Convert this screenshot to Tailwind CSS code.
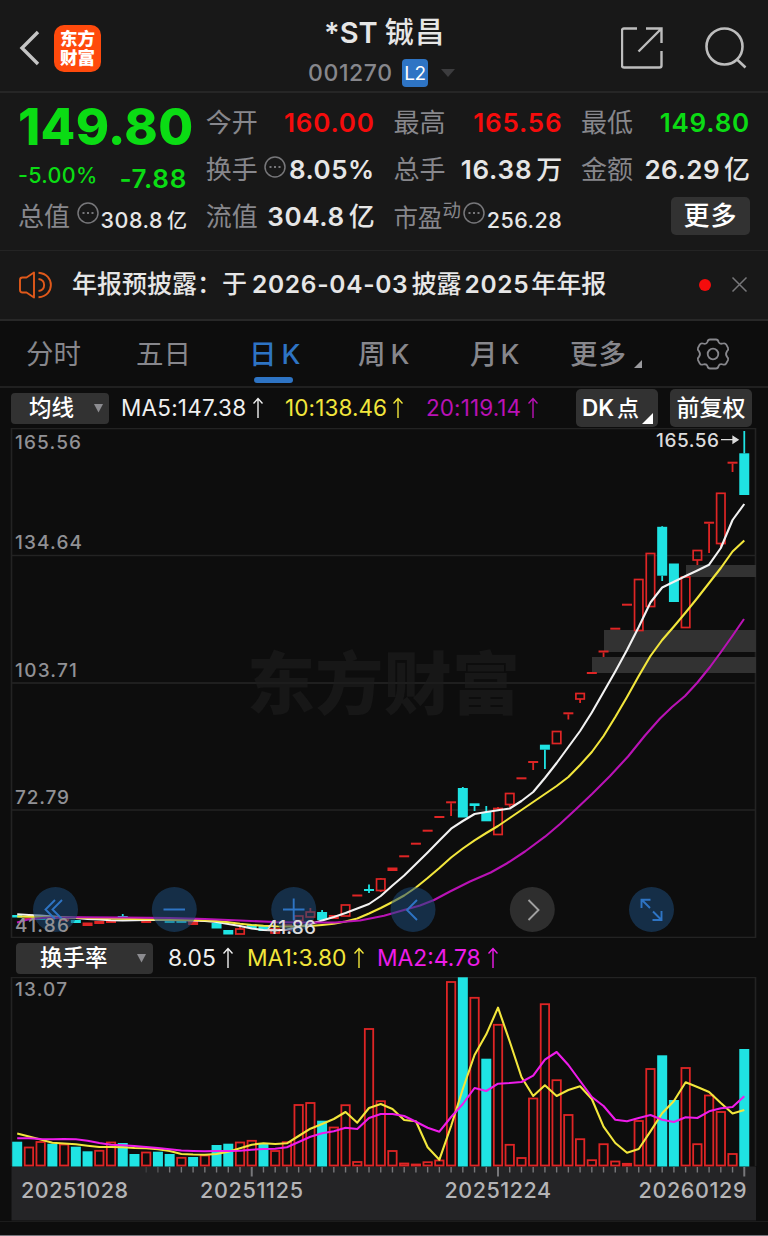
<!DOCTYPE html>
<html lang="zh-CN">
  <head>
    <meta charset="UTF-8" />
    <meta name="viewport" content="width=device-width, initial-scale=1.0" />
    <title>*ST铖昌 001270</title>
    <script src="https://cdn.jsdelivr.net/npm/@tailwindcss/browser@4"></script>
  </head>
  <body class="bg-[#0d0d0d] text-[#e6e6e6] font-['Inter','Noto_Sans_CJK_SC',sans-serif] w-[768px] h-[1236px] overflow-hidden whitespace-nowrap leading-none">
    <!-- Header -->
    <header class="h-[93px] bg-[#181818] border-b-2 border-[#262626] flex justify-between relative">
      <div class="flex items-center pl-[19px] pt-[5px] gap-[14px]">
        <svg class="w-[21px] h-9" viewBox="0 0 21 36" fill="none" stroke="#c4c4c4" stroke-width="3.4">
          <path d="M19 2 L3 18 L19 34" />
        </svg>
        <div class="w-[47px] h-[47px] rounded-[10px] bg-[#ff4a0c] text-white font-black text-[17.5px] leading-[19.5px] flex flex-col items-center justify-center">
          <span>东方</span>
          <span>财富</span>
        </div>
      </div>
      <div class="absolute left-[308px] top-0 w-[150px] pt-4">
        <h1 class="text-[29px] leading-[34px] font-medium pl-4 flex gap-[7px]"><span class="font-semibold">*ST</span><span class="tracking-[1.5px]">铖昌</span></h1>
        <div class="flex items-center mt-[9px] h-7">
          <span class="text-[23px] font-medium text-[#87878c] tracking-[0.6px] w-[94px]">001270</span>
          <span class="w-[26px] h-7 rounded bg-[#2e74c4] text-white text-[19px] tracking-[-0.5px] flex items-center justify-center">L2</span>
          <svg class="w-[14px] h-2 ml-[13px]" viewBox="0 0 14 8"><path d="M0 0 H14 L7 8 Z" fill="#3c3c3e" /></svg>
        </div>
      </div>
      <div class="flex items-start pt-[27px] pr-[21px] gap-[42px]">
        <svg class="w-[42px] h-[42px]" viewBox="0 0 42 42" fill="none" stroke="#bdbdbd" stroke-width="2.4">
          <path d="M16 1.500 H3 Q1 1.500 1 3.500 V38.500 Q1 40.500 3 40.500 H38.500 Q40.500 40.500 40.500 38.500 V24 M25 1.500 H40.500 V16 M40.500 1.500 L17.500 24.500" />
        </svg>
        <svg class="w-[42px] h-[42px]" viewBox="0 0 42 42" fill="none" stroke="#bdbdbd" stroke-width="2.6">
          <circle cx="19.500" cy="19.500" r="18" />
          <path d="M31.500 32 L40.500 40.500" />
        </svg>
      </div>
    </header>

    <!-- Quote summary -->
    <section class="h-[157px] bg-[#181818] px-[18px] pt-[6px] grid grid-cols-[169px_169px_169px_169px] grid-rows-[47px_47px_47px] gap-x-[18.7px] text-[26px]">
      <div class="flex items-center text-[#0bdc14] font-extrabold text-[50.5px] tracking-[0.3px] pt-[9px]">149.80</div>
      <div class="flex items-center justify-between">
        <span class="text-[#87878c]">今开</span>
        <span class="text-[#f50c0c] font-semibold tracking-[0.8px]">160.00</span>
      </div>
      <div class="flex items-center justify-between">
        <span class="text-[#87878c]">最高</span>
        <span class="text-[#f50c0c] font-semibold tracking-[0.8px]">165.56</span>
      </div>
      <div class="flex items-center justify-between">
        <span class="text-[#87878c]">最低</span>
        <span class="text-[#0bdc14] font-semibold tracking-[0.8px]">149.80</span>
      </div>

      <div class="flex items-center justify-between text-[#0bdc14]">
        <span class="text-[21.5px] font-medium tracking-[0.3px] pt-[12px]">-5.00%</span>
        <span class="font-semibold tracking-[0.7px] pt-[18px]">-7.88</span>
      </div>
      <div class="flex items-center justify-between">
        <span class="text-[#87878c]">换手</span>
        <span class="flex items-center gap-[3px]">
          <svg class="w-[22px] h-[22px] -mt-[6px]" viewBox="0 0 22 22" fill="none" stroke="#77777a" stroke-width="1.5"><circle cx="11" cy="11" r="10" /><path d="M5.500 11 h2 M10 11 h2 M14.500 11 h2" stroke-width="2" /></svg>
          <span class="font-semibold tracking-[0.5px]">8.05%</span>
        </span>
      </div>
      <div class="flex items-center justify-between">
        <span class="text-[#87878c]">总手</span>
        <span class="font-medium flex items-center gap-[4px]"><span class="font-semibold tracking-[0.8px]">16.38</span><span>万</span></span>
      </div>
      <div class="flex items-center justify-between">
        <span class="text-[#87878c]">金额</span>
        <span class="font-medium flex items-center gap-[4px]"><span class="font-semibold tracking-[0.5px]">26.29</span><span>亿</span></span>
      </div>

      <div class="flex items-center justify-between">
        <span class="text-[#87878c]">总值</span>
        <span class="flex items-center gap-[2px]">
          <svg class="w-[22px] h-[22px] -mt-2" viewBox="0 0 22 22" fill="none" stroke="#77777a" stroke-width="1.5"><circle cx="11" cy="11" r="10" /><path d="M5.500 11 h2 M10 11 h2 M14.500 11 h2" stroke-width="2" /></svg>
          <span class="font-medium text-[21.5px] flex items-center gap-1 pt-[9px]"><span class="tracking-[0.5px]">308.8</span><span class="text-[20px]">亿</span></span>
        </span>
      </div>
      <div class="flex items-center justify-between">
        <span class="text-[#87878c]">流值</span>
        <span class="font-medium flex items-center gap-[4px]"><span class="font-semibold tracking-[0.6px]">304.8</span><span>亿</span></span>
      </div>
      <div class="flex items-center justify-between">
        <span class="flex items-center text-[#87878c]"><span class="text-[24.5px] pt-1">市盈</span><span class="text-[18.5px] -mt-3">动</span></span>
        <span class="flex items-center gap-[2px]">
          <svg class="w-[22px] h-[22px] -mt-2" viewBox="0 0 22 22" fill="none" stroke="#77777a" stroke-width="1.5"><circle cx="11" cy="11" r="10" /><path d="M5.500 11 h2 M10 11 h2 M14.500 11 h2" stroke-width="2" /></svg>
          <span class="font-medium text-[21.5px] tracking-[0.5px] pt-[9px]">256.28</span>
        </span>
      </div>
      <div class="flex items-center justify-end">
        <button class="w-[79px] h-[38px] rounded-[5px] bg-[#323232] text-white font-medium tracking-[1px] -mt-[2px]">更多</button>
      </div>
    </section>

    <!-- Notice -->
    <section class="h-[71px] bg-[#181818] border-t border-b-2 border-t-[#242424] border-b-[#282828] flex items-center pl-[19px] pr-5 pb-px">
      <svg class="w-[33px] h-7" viewBox="0 0 33 28" fill="none" stroke="#e0591a" stroke-width="1.9">
        <path d="M15 1.500 V26.500 L7.500 21.500 H3.500 Q1 21.500 1 19 V9 Q1 6.500 3.500 6.500 H7.500 Z" stroke-linejoin="round" />
        <path d="M19.500 1.800 C36 3 36 25 19.500 26.200 M19.500 8 C27 9 27 19 19.500 20" />
      </svg>
      <div class="ml-5 flex items-center font-medium text-[25px]"><span>年报预披露：于</span><span class="ml-[5px] mr-[3px] font-semibold text-[24.5px] tracking-[0.7px]">2026-04-03</span><span>披露</span><span class="ml-[3px] mr-[2px] font-semibold text-[24.5px] tracking-[0.7px]">2025</span><span>年年报</span></div>
      <span class="ml-auto w-3 h-3 rounded-full bg-[#f50c0c]"></span>
      <svg class="w-[17px] h-[17px] ml-5" viewBox="0 0 17 17" stroke="#77777a" stroke-width="1.5"><path d="M1.500 1.500 L15.500 15.500 M15.500 1.500 L1.500 15.500" /></svg>
    </section>

    <!-- Period tabs -->
    <nav class="h-[67px] border-b-2 border-[#202020] flex items-center text-[27.5px] text-[#87878c] pl-[26px] pt-[2px]">
      <span class="w-[110px]">分时</span>
      <span class="w-[113px]">五日</span>
      <span class="w-[109px] text-[#2e74c4] font-medium relative flex gap-[5px]"><span>日</span><span>K</span><i class="absolute left-[5px] top-[36px] w-[39px] h-[6px] rounded-full bg-[#2e74c4]"></i></span>
      <span class="w-[112px] font-medium flex gap-[5px]"><span>周</span><span>K</span></span>
      <span class="w-[100px] font-medium flex gap-[3px]"><span>月</span><span>K</span></span>
      <span class="w-[126px] font-medium flex items-end gap-[7px]"><span class="tracking-[1px]">更多</span><svg class="w-2 h-2" viewBox="0 0 8 8"><path d="M8 0 V8 H0 Z" fill="#9a9a9e" /></svg></span>
      <svg class="w-[34px] h-[34px] -mt-[2px]" viewBox="0 0 34 34" fill="none" stroke="#87878c" stroke-width="1.8">
        <path d="M14 2.500 H20 Q22 2.500 22.600 5 Q23.500 7.500 27 6.500 Q29.300 5.800 30.300 7.700 L32 10.800 Q32.800 12.700 31 14.200 Q29 17 31 19.800 Q32.800 21.300 32 23.200 L30.300 26.300 Q29.300 28.200 27 27.500 Q23.500 26.500 22.600 29 Q22 31.500 20 31.500 H14 Q12 31.500 11.400 29 Q10.500 26.500 7 27.500 Q4.700 28.200 3.700 26.300 L2 23.200 Q1.200 21.300 3 19.800 Q5 17 3 14.200 Q1.200 12.700 2 10.800 L3.700 7.700 Q4.700 5.800 7 6.500 Q10.500 7.500 11.400 5 Q12 2.500 14 2.500 Z" />
        <circle cx="17" cy="17" r="5.300" />
      </svg>
    </nav>

    <!-- Moving average row -->
    <div class="h-10 flex items-center pl-[11px] text-[22.5px]">
      <button class="w-[98px] h-[31px] rounded bg-[#323232] text-white font-medium flex items-center justify-between pl-[18px] pr-[6px]">均线<svg class="w-[9px] h-[9px]" viewBox="0 0 9 9"><path d="M0 0 H9 L4.500 8.500 Z" fill="#8c8c90" /></svg></button>
      <span class="w-[164px] ml-3 text-[#f0f0f0] flex items-center gap-[7px]"><span class="tracking-[0.2px] pt-px">MA5:147.38</span><svg class="w-[10px] h-[22px]" viewBox="0 0 10 22" fill="none" stroke="currentColor" stroke-width="1.4"><path d="M5 21 V1.500 M0.500 6.500 L5 1.500 L9.500 6.500" /></svg></span>
      <span class="w-[141px] text-[#f2e63c] flex items-center gap-[6px]"><span class="tracking-[0.1px] pt-px">10:138.46</span><svg class="w-[10px] h-[22px]" viewBox="0 0 10 22" fill="none" stroke="currentColor" stroke-width="1.4"><path d="M5 21 V1.500 M0.500 6.500 L5 1.500 L9.500 6.500" /></svg></span>
      <span class="w-[150px] text-[#b912b5] flex items-center gap-[7px]"><span class="tracking-[0.1px] pt-px">20:119.14</span><svg class="w-[10px] h-[22px]" viewBox="0 0 10 22" fill="none" stroke="currentColor" stroke-width="1.4"><path d="M5 21 V1.500 M0.500 6.500 L5 1.500 L9.500 6.500" /></svg></span>
      <button class="w-[82px] h-[38px] rounded-[5px] bg-[#323232] text-white font-medium relative flex items-center gap-[3px] pl-[6px]"><span class="font-semibold">DK</span><span class="text-[22px]">点</span><svg class="absolute right-[5px] bottom-[3px] w-[11px] h-[11px]" viewBox="0 0 11 11"><path d="M11 0 V11 H0 Z" fill="#fff" /></svg></button>
      <button class="w-[82px] h-[38px] rounded-[5px] bg-[#323232] text-white font-medium ml-3 text-[23px]">前复权</button>
    </div>

    <!-- Candlestick chart -->
    <svg id="kline" class="block w-[768px] h-[510px]" viewBox="0 428 768 510">
      <g fill="none" stroke="#232323" stroke-width="1.6">
        <rect x="11.500" y="428.500" width="744" height="509" />
        <path d="M12 555.500 H755 M12 683 H755 M12 810 H755" />
      </g>
      <text x="247" y="709" font-size="68" font-weight="900" fill="#171717" textLength="273">东方财富</text>
      <path d="M12 683 H755" stroke="#202020" stroke-width="1.6" />
      <g fill="#323232">
        <rect x="686" y="565" width="70" height="12" />
        <rect x="604" y="630" width="152" height="22" />
        <rect x="592" y="657" width="164" height="16" />
      </g>
      <g id="candles"></g>
      <g id="priceLines" fill="none" stroke-width="2.1" stroke-linejoin="round"></g>
      <g fill="#919195" font-size="19" font-weight="500">
        <text x="15" y="448.500" textLength="66">165.56</text>
        <text x="15" y="549" textLength="67">134.64</text>
        <text x="15" y="677" textLength="62">103.71</text>
        <text x="15" y="803.500" textLength="54">72.79</text>
      </g>
      <text x="656" y="446.500" font-size="19" font-weight="500" fill="#dcdcdc" textLength="63">165.56</text>
      <path d="M721 439.700 H736 M733 436.500 L738 439.700 L733 443 Z" stroke="#dcdcdc" stroke-width="1.300" fill="#dcdcdc" />
      <!-- chart controls -->
      <g fill="#1e4a78" fill-opacity="0.55">
        <circle cx="55.500" cy="909.500" r="22.500" />
        <circle cx="174.300" cy="909.500" r="22.500" />
        <circle cx="293.700" cy="909.500" r="22.500" />
        <circle cx="413" cy="909.500" r="22.500" />
        <circle cx="651.500" cy="909.500" r="22.500" />
      </g>
      <circle cx="532.300" cy="909.500" r="22.500" fill="#2e2e2e" />
      <g fill="none" stroke="#2e74c4" stroke-width="1.900">
        <path d="M55 900 L45.500 909.500 L55 919 M62 900 L52.500 909.500 L62 919" />
        <path d="M163.500 909.500 H185 M283 909.500 H304.500 M293.700 898.500 V920.500" />
        <path d="M417 900 L407 910 L417 920" />
        <path d="M641.500 908 V899.700 H650.500 M642 900 L650 908 M661.500 911 V920 H652.500 M661 919.500 L653 911.500" />
      </g>
      <path d="M528.500 900 L538.500 910 L528.500 920" fill="none" stroke="#a0a0a0" stroke-width="1.900" />
      <text x="15" y="931.500" fill="#919195" font-size="19" font-weight="500" textLength="54">41.86</text>
      <text x="266" y="933.500" font-size="19" font-weight="500" fill="#dcdcdc" textLength="50">41.86</text>
    </svg>

    <!-- Turnover row -->
    <div class="h-[39px] flex items-center pl-4 pt-px text-[22.8px]">
      <button class="w-[137px] h-[31px] rounded bg-[#323232] text-white font-medium text-[22.5px] flex items-center justify-between pl-6 pr-[7px]">换手率<svg class="w-[9px] h-[9px]" viewBox="0 0 9 9"><path d="M0 0 H9 L4.500 8.500 Z" fill="#8c8c90" /></svg></button>
      <span class="w-[79px] ml-[15px] text-[#f0f0f0] flex items-center gap-[7px]"><span>8.05</span><svg class="w-[10px] h-[22px]" viewBox="0 0 10 22" fill="none" stroke="currentColor" stroke-width="1.4"><path d="M5 21 V1.500 M0.500 6.500 L5 1.500 L9.500 6.500" /></svg></span>
      <span class="w-[130px] text-[#f2e63c] flex items-center gap-[7px]"><span>MA1:3.80</span><svg class="w-[10px] h-[22px]" viewBox="0 0 10 22" fill="none" stroke="currentColor" stroke-width="1.4"><path d="M5 21 V1.500 M0.500 6.500 L5 1.500 L9.500 6.500" /></svg></span>
      <span class="text-[#ee1cea] flex items-center gap-[7px]"><span>MA2:4.78</span><svg class="w-[10px] h-[22px]" viewBox="0 0 10 22" fill="none" stroke="currentColor" stroke-width="1.4"><path d="M5 21 V1.500 M0.500 6.500 L5 1.500 L9.500 6.500" /></svg></span>
    </div>

    <!-- Turnover chart and date axis -->
    <svg id="volume" class="block w-[768px] h-[259px]" viewBox="0 977 768 259">
      <path d="M11.500 1166 V977.500 H755.500 V1166" fill="none" stroke="#232323" stroke-width="1.600" />
      <rect x="11.500" y="1166.500" width="744.500" height="54" fill="#242426" />
      <path d="M0 1221.500 H768" stroke="#1c1c1c" />
      <path d="M0 1235.500 H768" stroke="#77757c" />
      <text x="15" y="996" fill="#919195" font-size="19" font-weight="500" textLength="52">13.07</text>
      <g id="bars"></g>
      <g id="volLines" fill="none" stroke-width="2.1" stroke-linejoin="round"></g>
      <g id="ticks" stroke="#77777a" stroke-width="1.400"></g>
      <g fill="#b4b4b6" font-size="21.500" font-weight="500">
        <text x="21" y="1197.500" textLength="107">20251028</text>
        <text x="200" y="1197.500" textLength="103">20251125</text>
        <text x="444.500" y="1197.500" textLength="106.500">20251224</text>
        <text x="638.500" y="1197.500" textLength="108">20260129</text>
      </g>
    </svg>

    <script>
      const RED = "#df2525";
      const CYAN = "#1fe3e3";
      const cx = (i) => 17.2 + i * 11.727;

      // [color, body top, body bottom, high, low]
      const candles = [
        ["c", 915, 917.5], ["r", 918, 920], ["c", 918, 920], ["r", 917, 919], ["r", 918, 921],
        ["c", 920, 923], ["r", 922.5, 926], ["r", 921, 924], ["r", 921, 923], ["c", 916, 917.5, 914, 919],
        ["c", 919, 920.5], ["r", 920, 923], ["c", 919, 920.5], ["c", 920, 923], ["c", 921, 923],
        ["r", 921, 925], ["r", 920, 922], ["c", 923, 928.5], ["c", 930, 934.5], ["b", 929, 934, 927],
        ["c", 924.5, 928], ["c", 926, 931], ["b", 929, 933], ["b", 925, 930], ["b", 916, 920.5],
        ["b", 912, 917, 908], ["c", 912, 920, 910], ["r", 915, 919], ["b", 905, 916], ["r", 894.5, 896.5],
        ["c", 889, 891, 884.5, 893], ["b", 879, 890.5, 878, 892], ["r", 867.5, 871], ["r", 855.3, 857.3], ["r", 842.7, 844.7],
        ["r", 829.7, 831.7], ["r", 816, 818], ["r", 801.3, 803.3, 802, 816], ["c", 788, 817.5, 787], ["c", 803.3, 806, 804, 811],
        ["c", 812, 821.3, 806], ["b", 808.5, 834.5, 807], ["b", 793.5, 804.5, 793, 807], ["r", 777.3, 779.3], ["r", 761, 763, 762, 770],
        ["c", 744.7, 749.7, 745, 769], ["b", 731.5, 743.5], ["r", 712.3, 714.3, 713, 719.5], ["b", 693.5, 699, 693, 703], ["r", 672, 674],
        ["r", 650.5, 652.5, 651, 657], ["r", 627.7, 629.7], ["r", 603.7, 605.7], ["b", 579.5, 630.5], ["b", 553.5, 606.5],
        ["c", 526.8, 575.7, 526, 581], ["c", 563.5, 602], ["b", 577, 627.5], ["b", 550.5, 560, 550, 565], ["r", 521.7, 523.7, 522, 553],
        ["b", 493.3, 543.5, 493, 547], ["r", 461.7, 463.7, 462, 472], ["c", 453.3, 495, 431],
      ];

      let html = "";
      candles.forEach(([kind, top, bottom, high = top, low = bottom], i) => {
        const x = cx(i);
        const color = kind === "c" ? CYAN : RED;
        if (high < top) html += `<path d="M${x} ${high} V${top}" stroke="${color}" stroke-width="1.8"/>`;
        if (low > bottom) html += `<path d="M${x} ${bottom} V${low}" stroke="${color}" stroke-width="1.8"/>`;
        if (kind === "b") {
          html += `<rect x="${x - 4.2}" y="${top}" width="8.4" height="${bottom - top}" fill="none" stroke="${RED}" stroke-width="1.7"/>`;
        } else {
          html += `<rect x="${x - 5}" y="${top}" width="10" height="${bottom - top}" fill="${color}"/>`;
        }
      });
      document.getElementById("candles").innerHTML = html;

      const line = (pts, color) => `<polyline points="${pts.join(" ")}" stroke="${color}"/>`;
      const series = (ys) => ys.map((y, i) => `${cx(i)},${y}`);

      const ma5 = [
        914.3, 915, 915.5, 916.5, 917.3, 918, 919, 919.5, 920.3, 920.5, 920.3, 920, 919.8, 920, 920.3, 920.5,
        921, 922, 924, 926, 928.5, 930, 930.5, 929.5, 927, 924, 920.5, 917, 913, 908.5, 904, 896, 885.5, 875.5,
        864, 852.5, 840.5, 828.7, 821, 814, 812, 810.3, 808.5, 801, 792, 778, 763, 747, 731, 712.5, 692, 671.5,
        650, 627, 602.5, 587.5, 581.7, 576, 570.5, 564.7, 548, 520, 504,
      ];
      const ma10 = [
        916.5, 916.7, 917, 917.2, 917.4, 917.7, 918, 918.2, 918.5, 918.8, 919, 919.3, 919.5, 919.7, 920, 920,
        920.3, 921, 922.3, 923.8, 925, 925.8, 926.3, 926.5, 926.3, 926, 925, 923.8, 921.5, 918.5, 913.5, 908, 902,
        895.5, 887.5, 878, 868, 857.5, 848.5, 840.3, 833, 826, 818, 810, 802, 794, 786, 777, 765, 752, 736, 717,
        697, 676, 656, 640, 626.5, 612.5, 598, 583, 568, 551.5, 540.5,
      ];
      const ma20 = [
        "17,922.5", "28,919.5", "45,917.7", "76,917.3", "123,917.5", "170,918", "205,919", "240,920.5", "275,922",
        "300,922.5", "335,922.5", "360,920.5", "384,915.7", "404,910", "420,905.5", "434,900", "450,891.5", "470,881.5",
        "490.7,872.5", "506.7,863.5", "525,851.5", "545,836.7", "560,824", "576.7,808.5", "592,794", "610,776", "628,756.5",
        "645,735.5", "660,718.5", "672,707", "685,696", "697,683", "710,667", "721,652", "732,636.5", "744,619",
      ];
      document.getElementById("priceLines").innerHTML =
        line(series(ma5), "#f2f2f2") + line(series(ma10), "#f2e63c") + line(ma20, "#b912b5");

      // turnover bar tops; cyan for falling days
      const tops = [
        1141.7, 1147, 1141.5, 1143.7, 1144, 1146.7, 1151.3, 1150.3, 1142, 1143, 1154, 1152, 1151.7, 1154, 1157.3, 1157,
        1155, 1145, 1143.7, 1142, 1140.3, 1144, 1150.5, 1141.7, 1104.5, 1102.5, 1120.7, 1127, 1104.7, 1161.5, 1028.5,
        1100.7, 1150.5, 1163, 1164, 1161.7, 1160, 981.5, 977.3, 997.3, 1058.7, 1024.3, 1144.3, 1157.5, 1098, 1003.7,
        1079.7, 1114.5, 1138.7, 1159.7, 1143.7, 1161, 1163.3, 1120.5, 1068.5, 1055.3, 1100, 1067.5, 1143.7, 1095,
        1111.5, 1153.5, 1049,
      ];
      const down = [0, 3, 5, 6, 9, 10, 12, 13, 15, 17, 18, 21, 26, 38, 40, 55, 56, 62];
      document.getElementById("bars").innerHTML = tops
        .map((y, i) =>
          down.includes(i)
            ? `<rect x="${cx(i) - 5}" y="${y}" width="10" height="${1166.5 - y}" fill="${CYAN}"/>`
            : `<rect x="${cx(i) - 4.2}" y="${y + 0.5}" width="8.4" height="${Math.max(1165.5 - y - 0.5, 1)}" fill="none" stroke="${RED}" stroke-width="1.8"/>`
        )
        .join("");

      const vma1 = [
        1133.5, 1136.5, 1139.5, 1142.7, 1143.5, 1144.3, 1145.7, 1147, 1147, 1147.3, 1148, 1148.3, 1149.3, 1151, 1154,
        1154.5, 1154.7, 1154, 1151.7, 1148.3, 1144.7, 1143.3, 1144, 1143.3, 1136, 1128.7, 1124, 1119, 1112, 1122.7, 1108,
        1104, 1109, 1120, 1121.3, 1147.3, 1159.7, 1126, 1089, 1055, 1034.3, 1007.7, 1041.5, 1077, 1096, 1085.3, 1096,
        1090, 1086.3, 1099, 1126.7, 1143, 1152.7, 1149, 1131.3, 1113.3, 1101, 1082.3, 1087, 1092, 1103, 1113.5, 1110,
      ];
      const vma2 = [
        1138.3, 1138.3, 1139, 1139.3, 1139, 1139.3, 1140.7, 1143, 1144.7, 1145.3, 1146, 1147, 1148, 1149.3, 1150.5,
        1151, 1151.3, 1151, 1151, 1150.7, 1149.7, 1149, 1148.7, 1147.3, 1142, 1136.7, 1133.3, 1131.3, 1127.7, 1129, 1118,
        1114, 1114, 1116, 1121.7, 1127.7, 1131.7, 1117, 1104, 1088, 1091, 1083.7, 1083, 1082, 1075.7, 1059.7, 1052,
        1065, 1081, 1097, 1106, 1119.7, 1121.3, 1118, 1115, 1119.7, 1122, 1117.3, 1118, 1111.3, 1108.3, 1107, 1096.3,
      ];
      document.getElementById("volLines").innerHTML =
        line(series(vma1), "#f2e63c") + line(series(vma2), "#ee1cea");

      let ticks = "";
      for (let i = 11; i < 63; i++) {
        const long = i === 20 || i === 41 || i === 62;
        ticks += `<path d="M${cx(i)} 1167 V${long ? 1176.5 : 1172.5}" ${long ? 'stroke-width="2"' : ""} opacity="${i === 11 ? 0.3 : i === 12 ? 0.6 : 1}"/>`;
      }
      document.getElementById("ticks").innerHTML = ticks;
    </script>
  </body>
</html>
